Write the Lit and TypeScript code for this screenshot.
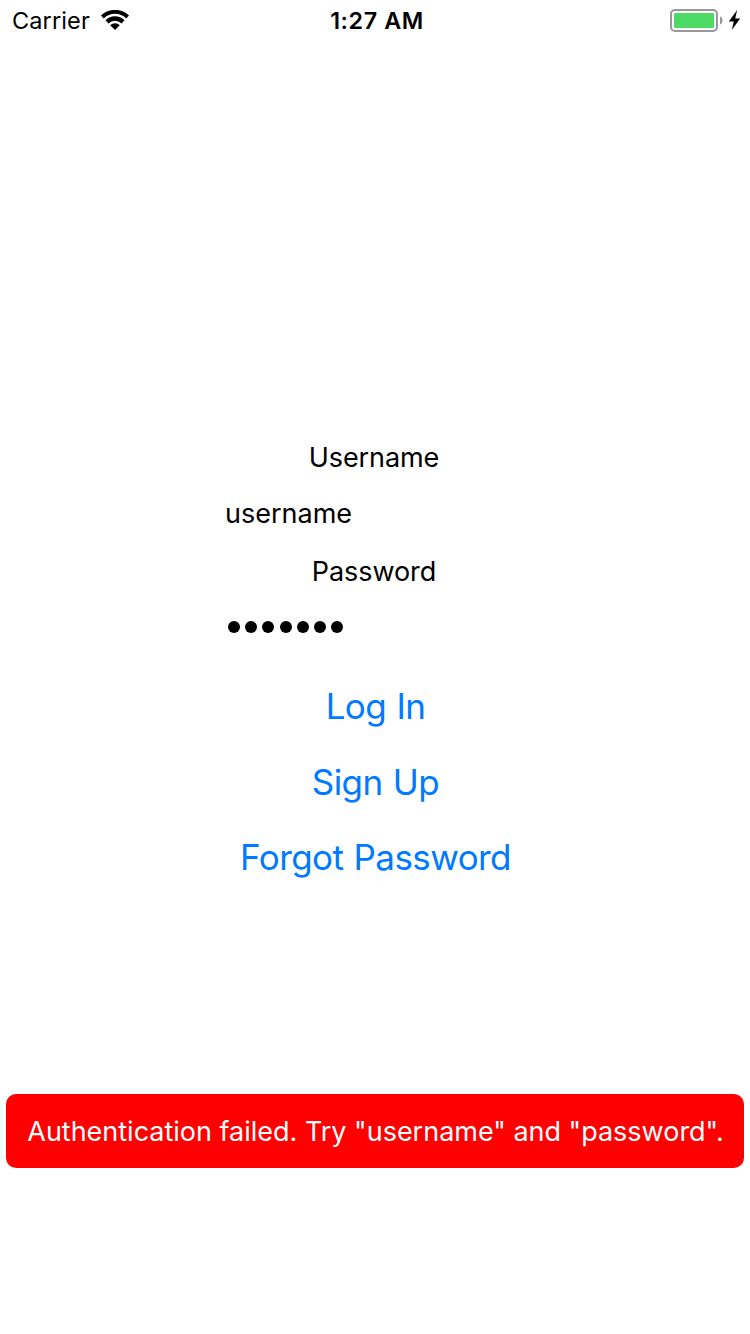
import { LitElement, html, css } from "lit";
import { customElement, property, state } from "lit/decorators.js";

@customElement("status-bar")
class StatusBar extends LitElement {
  static styles = css`
    :host { display: grid; grid-template-columns: 1fr auto 1fr; align-items: center; height: 40px; }
    svg { display: block; }
    .left { display: flex; align-items: center; gap: 11px; padding-left: 12px; }
    .carrier { font-size: 23.5px; letter-spacing: 0.12px; line-height: 38px; padding-top: 2px; }
    .time { font-size: 23.3px; font-weight: 580; letter-spacing: 0.6px; line-height: 38px; padding: 2px 0 0 4px; }
    .right { display: flex; justify-content: flex-end; padding-right: 9px; }
  `;

  render() {
    return html`
      <div class="left">
        <span class="carrier">Carrier</span>
        <svg width="28" height="20" viewBox="0 0 28 20">
          <path d="M0 5.4A20.5 20.5 0 0 1 28 5.4L25.2 8.4A16 16 0 0 0 2.8 8.4Z" />
          <path d="M4.5 10.3A13.4 13.4 0 0 1 23.5 10.3L20.5 13.4A9.3 9.3 0 0 0 7.5 13.4Z" />
          <path d="M9.2 15.2A6.8 6.8 0 0 1 18.8 15.2L14 20Z" />
        </svg>
      </div>
      <div class="time">1:27 AM</div>
      <div class="right">
        <svg width="71" height="24" viewBox="0 0 71 24">
          <rect x="1" y="2" width="46" height="21" rx="4" fill="none" stroke="#98989b" stroke-width="2" />
          <rect x="4" y="5" width="40" height="15" rx="1.3" fill="#4cd964" />
          <path d="M50 8.4C53.3 9.5 53.3 15.5 50 16.6Z" fill="#98989b" />
          <path d="M67.2 2L58.8 13.4H63.8L61.8 22L70.2 10.6H65.2Z" />
        </svg>
      </div>
    `;
  }
}

@customElement("login-field")
class LoginField extends LitElement {
  static styles = css`
    :host { display: flex; flex-direction: column; width: 300px; }
    .label { height: 34px; line-height: 34px; text-align: center; font-size: 27px; letter-spacing: -0.08px; padding-right: 2px; }
    .value { height: 34px; line-height: 34px; margin-top: 22px; font-size: 27px; letter-spacing: 0; }
    .secret { display: flex; align-items: center; padding-left: 2.8px; margin-top: 21px; height: 36px; margin-bottom: -1px; }
    .dots { display: flex; gap: 5.25px; padding-bottom: 2px; }
    .dot { width: 12px; height: 12px; border-radius: 50%; background: #000; }
  `;

  @property() label = "";
  @property() value = "";
  @property({ type: Boolean }) secret = false;

  render() {
    return html`
      <div class="label">${this.label}</div>
      ${this.secret
        ? html`<div class="value secret">
            <div class="dots">${[...this.value].map(() => html`<span class="dot"></span>`)}</div>
          </div>`
        : html`<div class="value">${this.value}</div>`}
    `;
  }
}

@customElement("app-root")
class AppRoot extends LitElement {
  static styles = css`
    :host {
      display: flex; flex-direction: column; height: 1334px; width: 750px;
      background: #fff; color: #000; font-family: Inter, sans-serif; white-space: nowrap;
    }
    .form { display: flex; flex-direction: column; align-items: center; gap: 24px; padding-top: 401px; }
    .actions { display: flex; flex-direction: column; align-items: center; gap: 31.5px; margin-top: 39px; padding-left: 1px; }
    .action {
      border: 0; padding: 0; background: none; font: inherit; font-size: 35px;
      line-height: 44px; color: #007aff; letter-spacing: -0.58px; word-spacing: 1px;
    }
    .toast {
      height: 74px; margin: 215px 6px 0; border-radius: 10px; background: #f00; color: #fff;
      text-align: center; font-size: 27px; line-height: 75px; letter-spacing: -0.01px; text-indent: 1px;
    }
  `;

  @state() private username = "username";
  @state() private password = "passwor";

  render() {
    return html`
      <status-bar></status-bar>
      <div class="form">
        <login-field label="Username" .value=${this.username}></login-field>
        <login-field label="Password" secret .value=${this.password}></login-field>
      </div>
      <div class="actions">
        ${["Log In", "Sign Up", "Forgot Password"].map((t) => html`<button class="action">${t}</button>`)}
      </div>
      <div class="toast">Authentication failed. Try "username" and "password".</div>
    `;
  }
}
